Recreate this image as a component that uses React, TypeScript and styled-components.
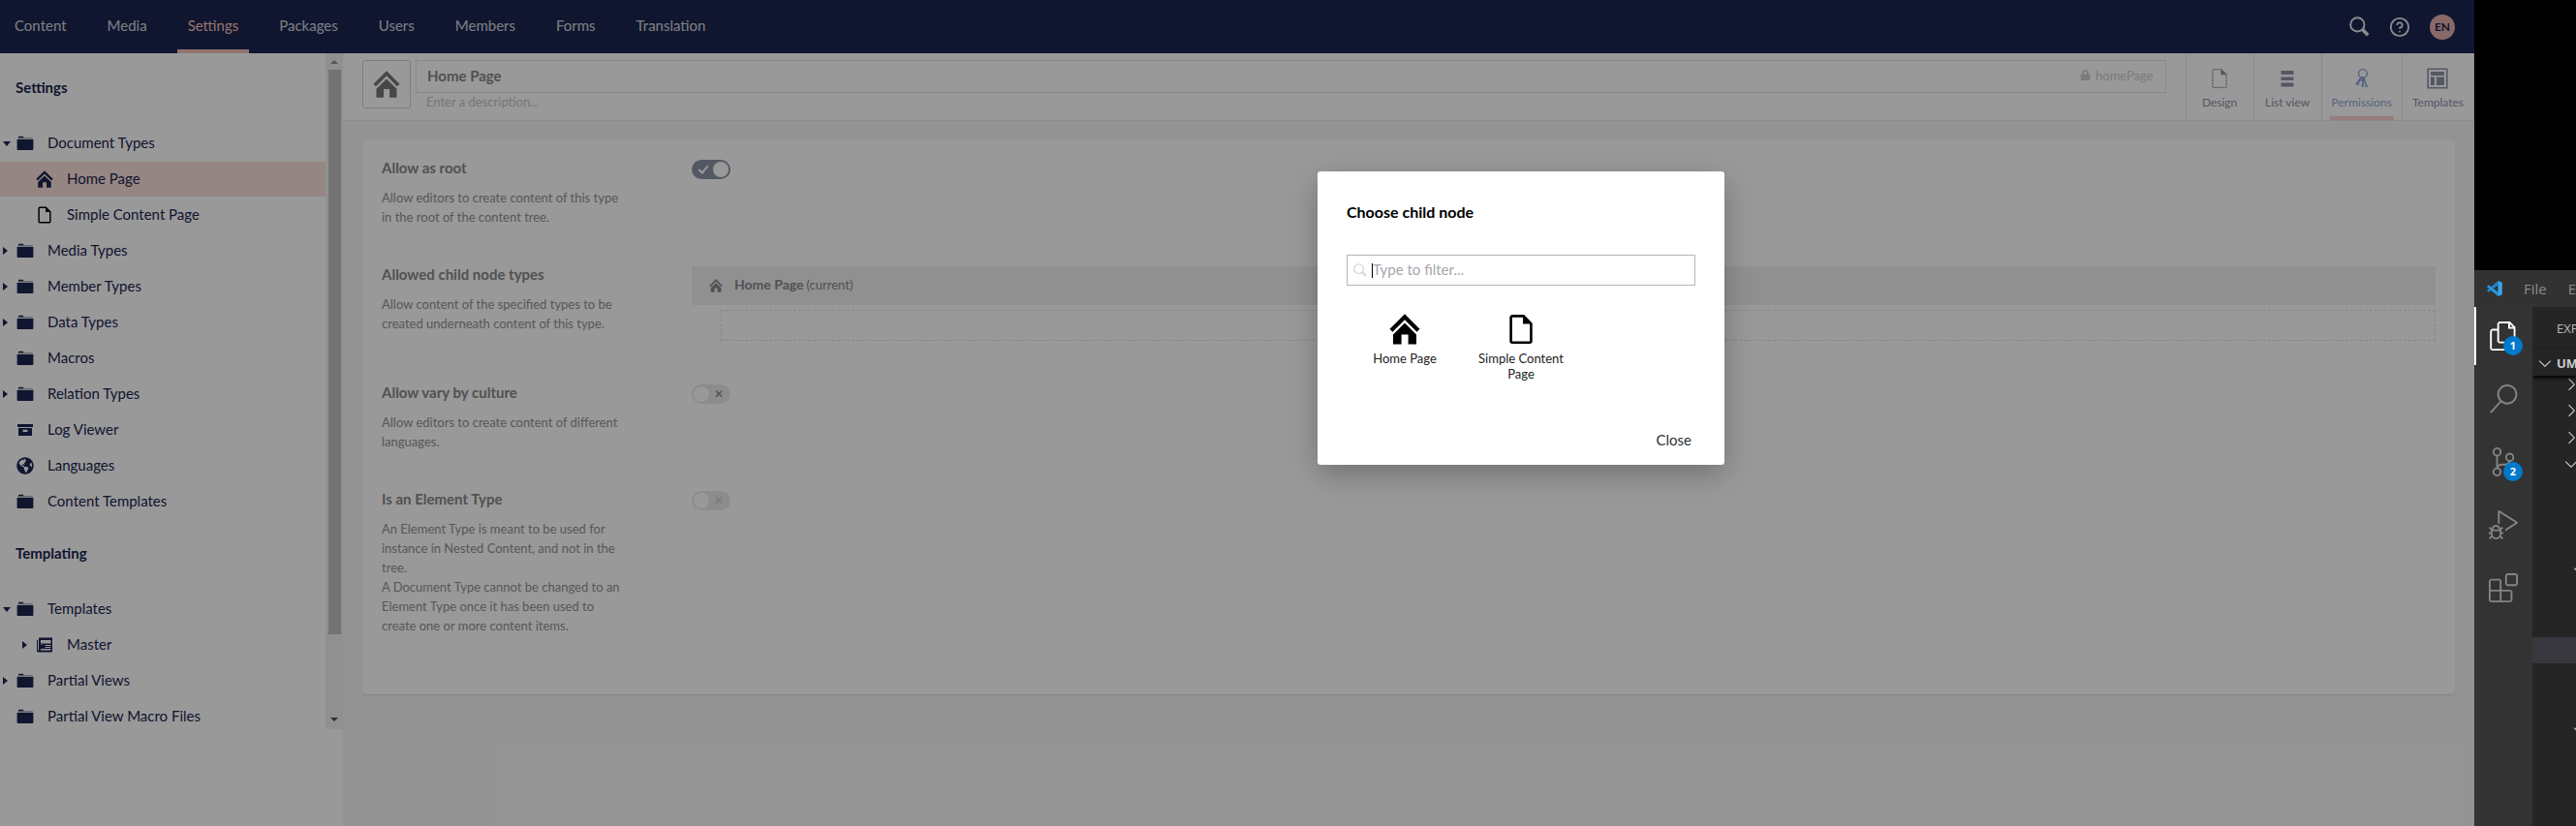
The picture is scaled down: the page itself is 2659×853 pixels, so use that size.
import React from "react";
import styled, { createGlobalStyle, css } from "styled-components";
import { FaGlobeAmericas, FaLock } from "react-icons/fa";
import {
  VscFiles,
  VscSearch,
  VscSourceControl,
  VscDebugAlt,
  VscExtensions,
  VscChevronRight,
  VscChevronDown,
} from "react-icons/vsc";
import { HelpCircle } from "lucide-react";

const color = {
  navy: "#1b264f",
  pink: "#f5c1bc",
  pale: "#fadfda",
  canvas: "#f6f6f7",
  faded: "#878789",
  fadedNavy: "#8d93a7",
  line: "#e6e6e8",
};

const GlobalStyle = createGlobalStyle`
  *, *::before, *::after { box-sizing: border-box; }
  body {
    margin: 0;
    background: #000;
    color: ${color.navy};
    font: 15px/20px Lato, "Open Sans", sans-serif;
  }
  a { color: inherit; text-decoration: none; }
  button, input { font: inherit; color: inherit; }
  h1, h2, p, ul { margin: 0; padding: 0; }
  ul { list-style: none; }
`;

/* ---------- icons ---------- */

const HomeIcon = ({ size }: { size: number }) => (
  <svg width={size} height={size} viewBox="0 0 32 32" aria-hidden="true">
    <path d="M2 17.2 16 3.2 30 17.2" fill="none" stroke="currentColor" strokeWidth="4.2" />
    <path d="M16 9.6 28 21.4V31.6H19.6V21.6H12.6V31.6H4V21.4Z" fill="currentColor" />
  </svg>
);

const PageIcon = ({ size, dashed }: { size: number; dashed?: boolean }) => (
  <svg width={size} height={size} viewBox="0 0 32 32" aria-hidden="true">
    <path
      d="M7 2.4H18.6L26.4 10.2V28.4a1.4 1.4 0 0 1-1.4 1.4H7a1.4 1.4 0 0 1-1.4-1.4V3.8A1.4 1.4 0 0 1 7 2.4Z"
      fill="none"
      stroke="currentColor"
      strokeWidth={dashed ? 1.8 : 2.6}
      strokeDasharray={dashed ? "3 1.4" : undefined}
    />
    <path d="M18 1.6 27.4 10.6H18Z" fill="currentColor" />
  </svg>
);

const FolderIcon = () => (
  <svg width="18" height="18" viewBox="0 0 18 18" aria-hidden="true">
    <path d="M2 2.6a.8.8 0 0 1 .8-.8H6.6l1.2 1.4H2Z" fill="currentColor" />
    <path d="M1.4 3.2H16.8V4.4H1.4Z" fill="currentColor" opacity=".45" />
    <path d="M.6 5H17.4V15.2a.8.8 0 0 1-.8.8H1.4a.8.8 0 0 1-.8-.8Z" fill="currentColor" />
  </svg>
);

const ArchiveIcon = () => (
  <svg width="18" height="18" viewBox="0 0 18 18" aria-hidden="true">
    <path d="M1 3H17V6H1Z" fill="currentColor" />
    <path fillRule="evenodd" d="M2 7H16V15H2ZM6.6 8.8V11H11.4V8.8Z" fill="currentColor" />
  </svg>
);

const NewsIcon = () => (
  <svg width="18" height="18" viewBox="0 0 18 18" aria-hidden="true">
    <path
      fillRule="evenodd"
      d="M3 1.500H17V15.500a1 1 0 0 1-1 1H2.500A1.500 1.500 0 0 1 1 15V4H2V14.500H3ZM5 4V7.500H15.500V4ZM9.500 9V10H15.500V9ZM9.500 11V12H15.500V11ZM5 13V14.500H15.500V13ZM5 8.500V9H7V8.500Z"
      fill="currentColor"
    />
  </svg>
);

const SearchIcon = ({ size }: { size: number }) => (
  <svg width={size} height={size} viewBox="0 0 20 20" fill="none" stroke="currentColor" aria-hidden="true">
    <circle cx="8" cy="8" r="6.8" strokeWidth="1.8" />
    <path d="M13.2 13.2 18.4 18.4" strokeWidth="3.4" />
  </svg>
);

const BarsIcon = () => (
  <svg width="22" height="22" viewBox="0 0 22 22" aria-hidden="true">
    <path d="M4.500 3H17.500V7H4.500ZM4.500 9.400H17.500V13H4.500ZM4.500 15.600H17.500V19.400H4.500Z" fill="currentColor" />
  </svg>
);

const KeysIcon = () => (
  <svg width="22" height="22" viewBox="0 0 22 22" fill="none" stroke="currentColor" aria-hidden="true">
    <circle cx="12" cy="6" r="4.400" strokeWidth="1.400" />
    <path d="M10.400 9.600 5 17.200M5.400 16 8 17.400M7 13.400 9 15" strokeWidth="1.800" />
    <path d="M12 9V20M13 10.600 16 20M12 13H9.600M12 18.400H10.400M14.600 19.200H17" strokeWidth="1.800" />
    <circle cx="11.600" cy="11.400" r="1.800" strokeWidth="1.400" />
  </svg>
);

const TemplateIcon = () => (
  <svg width="22" height="22" viewBox="0 0 22 22" aria-hidden="true">
    <path d="M1.200 1.200H20.800V20.800H1.200Z" fill="none" stroke="currentColor" strokeWidth="1.600" />
    <path d="M4 4H18V8H4ZM4 9.600H8V18H4ZM10 9.600H18V18H10Z" fill="currentColor" />
  </svg>
);

const CodeLogo = () => (
  <svg width="20" height="20" viewBox="0 0 20 20" aria-hidden="true">
    <path d="M14.400 0 19.800 2.200V17.800L14.400 20Z" fill="#3aa5ef" />
    <path d="M14.600 0V5.400L2.400 14.800 .3 13.200V12.200Z" fill="#1c84d0" />
    <path d="M14.600 20V14.600L2.400 5.200 .3 6.800V7.800Z" fill="#2a94e0" />
  </svg>
);

/* ---------- shell ---------- */

const Desktop = styled.div`
  display: flex;
  min-height: 100vh;
`;

const Backoffice = styled.div`
  position: relative;
  flex: 1;
  min-width: 0;
  display: flex;
  flex-direction: column;
  background: #fff;
`;

const Backdrop = styled.div`
  position: absolute;
  inset: 0;
  background: rgba(0, 0, 0, 0.4);
`;

const TopBar = styled.header`
  display: flex;
  justify-content: space-between;
  height: 55px;
  padding: 0 20px 0 4px;
  background: ${color.navy};
  color: #fff;
`;

const Sections = styled.nav`
  display: flex;
  gap: 20px;
`;

const SectionLink = styled.a<{ $active?: boolean }>`
  display: flex;
  align-items: center;
  padding: 0 11px 3px;
  opacity: 0.8;
  ${(p) =>
    p.$active &&
    css`
      color: ${color.pink};
      opacity: 1;
      background: linear-gradient(${color.pink}, ${color.pink}) bottom / 100% 4px no-repeat;
    `}
`;

const Tools = styled.div`
  display: flex;
  align-items: center;
  gap: 20px;
`;

const ToolButton = styled.button`
  display: flex;
  padding: 0;
  border: 0;
  background: none;
  opacity: 0.9;
`;

const Avatar = styled.button`
  width: 26px;
  height: 26px;
  padding: 0;
  border: 0;
  border-radius: 50%;
  background: #e3b0af;
  color: ${color.navy};
  font-size: 12px;
  font-weight: 700;
`;

const Body = styled.div`
  flex: 1;
  display: flex;
`;

/* ---------- sidebar ---------- */

const Sidebar = styled.aside`
  width: 354px;
  flex: none;
`;

const TreeScroll = styled.div`
  display: flex;
  height: 698px;
  overflow: hidden;
`;

const Trees = styled.div`
  flex: 1;
  padding-top: 18px;
`;

const TreeTitle = styled.h2`
  height: 36px;
  padding-left: 16px;
  font-size: 15px;
  font-weight: 700;
  line-height: 34px;
`;

const TreeList = styled.ul`
  display: flex;
  flex-direction: column;
  gap: 1px;
  padding: 21px 0 18px;
`;

const TreeLink = styled.a<{ $level: number; $active?: boolean }>`
  display: flex;
  align-items: center;
  height: 36px;
  padding-left: ${(p) => p.$level * 20}px;
  background: ${(p) => (p.$active ? color.pale : "none")};
`;

const TreeLabel = styled.span`
  padding-bottom: 2px;
`;

const Twisty = styled.span<{ $open?: boolean }>`
  display: flex;
  width: 17px;
  padding-left: 3px;
  &::before {
    content: "";
    border: 4px solid transparent;
    ${(p) =>
      p.$open
        ? css`border-top: 5px solid ${color.navy}; border-bottom: 0;`
        : css`border-left: 5px solid ${color.navy}; border-right: 0;`}
  }
`;

const NoTwisty = styled.span`
  width: 17px;
`;

const TreeIcon = styled.span<{ $black?: boolean }>`
  display: flex;
  width: 32px;
  color: ${(p) => (p.$black ? "#000" : "inherit")};
`;

const ScrollTrack = styled.div`
  display: flex;
  flex-direction: column;
  align-items: center;
  justify-content: space-between;
  width: 18px;
  padding: 7px 0 6px;
  background: #f0f0f0;
`;

const ScrollArrow = styled.span<{ $down?: boolean }>`
  border: 4px solid transparent;
  ${(p) =>
    p.$down
      ? css`border-top-color: #505050; border-bottom: 0; margin-bottom: 2px;`
      : css`border-bottom-color: #909090; border-top: 0;`}
`;

const ScrollThumb = styled.span`
  width: 13px;
  height: 583px;
  margin-bottom: 80px;
  background: #c0c0c0;
`;

/* ---------- editor ---------- */

const Editor = styled.main`
  flex: 1;
  min-width: 0;
  background: ${color.canvas};
`;

const EditorHeader = styled.header`
  display: flex;
  height: 70px;
  padding-left: 20px;
  background: #fff;
  border-bottom: 1px solid ${color.line};
`;

const IconPicker = styled.button`
  display: flex;
  align-items: center;
  justify-content: center;
  width: 50px;
  height: 50px;
  margin: 7px 5px 0 0;
  padding: 0;
  border: 1px solid #d2d2d4;
  border-radius: 3px;
  background: none;
  color: #777;
`;

const NameFields = styled.div`
  flex: 1;
  padding-top: 7px;
`;

const NameBox = styled.div`
  display: flex;
  align-items: center;
  height: 34px;
  padding: 0 12px 3px 11px;
  border: 1px solid ${color.line};
`;

const NameInput = styled.input`
  flex: 1;
  height: 28px;
  padding: 0;
  border: 0;
  background: none;
  color: ${color.faded};
  font-weight: 700;
`;

const Alias = styled.button`
  display: flex;
  align-items: center;
  gap: 5px;
  padding: 0;
  border: 0;
  background: none;
  color: #cdcdcf;
  font-size: 13px;
`;

const DescriptionInput = styled.input`
  display: block;
  width: 100%;
  height: 18px;
  padding: 0 11px;
  border: 0;
  background: none;
  font-size: 13px;
  &::placeholder {
    color: #c6c6c8;
    opacity: 1;
  }
`;

const Tabs = styled.nav`
  display: flex;
  margin-left: 20px;
  border-right: 1px solid ${color.line};
`;

const Tab = styled.a<{ $active?: boolean }>`
  display: flex;
  flex-direction: column;
  align-items: center;
  gap: 4px;
  min-width: 70px;
  padding: 15px 10px 0;
  border-left: 1px solid ${color.line};
  color: ${(p) => (p.$active ? "#90a8d1" : color.fadedNavy)};
  font-size: 12px;
  ${(p) =>
    p.$active &&
    css`
      background: linear-gradient(#f8d2ce, #f8d2ce) bottom / 66px 4px no-repeat;
    `}
`;

const Panel = styled.section`
  display: flex;
  flex-direction: column;
  gap: 40px;
  margin: 20px;
  padding: 20px 20px 60px;
  background: #fff;
  border-radius: 3px;
  box-shadow: 0 1px 1px rgba(0, 0, 0, 0.12);
`;

const Property = styled.div`
  display: flex;
  gap: 70px;
`;

const PropertyText = styled.div`
  width: 250px;
  flex: none;
`;

const PropertyLabel = styled.label`
  display: block;
  margin-bottom: 12px;
  color: ${color.faded};
  font-weight: 700;
  line-height: 17px;
`;

const PropertyHelp = styled.p`
  padding-bottom: 1px;
  color: #929294;
  font-size: 13px;
`;

const Toggle = styled.input`
  appearance: none;
  display: flex;
  align-items: center;
  width: 40px;
  height: 20px;
  margin: 0;
  padding: 2px;
  border-radius: 10px;
  background: #e9e9eb;
  &::before {
    content: "";
    order: 1;
    width: 16px;
    height: 16px;
    border-radius: 50%;
    background: #fff;
  }
  &::after {
    content: "✕";
    order: 2;
    width: 20px;
    color: #7c7c90;
    font: 700 12px/16px "DejaVu Sans", sans-serif;
    text-align: center;
  }
  &:checked {
    background: ${color.fadedNavy};
  }
  &:checked::before {
    order: 3;
  }
  &:checked::after {
    content: "";
    width: 6px;
    height: 10px;
    margin: 0 7px 3px;
    border: solid #fff;
    border-width: 0 2px 2px 0;
    transform: rotate(40deg);
  }
  &:disabled::after {
    color: #c6c6ca;
  }
`;

const ChildTypes = styled.div`
  flex: 1;
  padding-bottom: 5px;
`;

const ChildType = styled.div`
  display: flex;
  align-items: center;
  height: 40px;
  margin-bottom: 5px;
  padding-left: 18px;
  background: #f1f1f2;
  color: ${color.faded};
  font-size: 14px;
`;

const ChildName = styled.strong`
  margin: 0 3px 0 12px;
  padding-bottom: 2px;
`;

const ChildNote = styled.span`
  padding-bottom: 2px;
  font-size: 13px;
`;

const AddChild = styled.button`
  display: block;
  width: calc(100% - 30px);
  height: 32px;
  margin-left: 30px;
  border: 1px dashed #e0e0e2;
  background: none;
`;

/* ---------- dialog ---------- */

const Dialog = styled.section`
  position: absolute;
  top: 177px;
  left: 1360px;
  width: 420px;
  padding: 30px 30px 16px;
  border-radius: 3px;
  background: #fff;
  color: #000;
  box-shadow: 0 10px 30px rgba(0, 0, 0, 0.25);
`;

const DialogTitle = styled.h1`
  margin: 2px 0 34px;
  font-size: 16px;
  font-weight: 700;
  line-height: 20px;
`;

const Filter = styled.div`
  display: flex;
  align-items: center;
  height: 32px;
  padding-left: 6px;
  border: 1px solid #b5b5ba;
  color: #d8d8dc;
`;

const FilterCaret = styled.span`
  width: 1px;
  height: 15px;
  margin-left: 5px;
  background: #000;
`;

const FilterInput = styled.input`
  flex: 1;
  height: 30px;
  padding: 0 0 3px;
  border: 0;
  outline: 0;
  background: none;
  &::placeholder {
    color: #a6a6ac;
    opacity: 1;
  }
`;

const Choices = styled.ul`
  display: grid;
  grid-template-columns: repeat(3, 1fr);
  margin-top: 29px;
`;

const Choice = styled.button`
  display: flex;
  flex-direction: column;
  align-items: center;
  gap: 6px;
  width: 100%;
  padding: 0 10px;
  border: 0;
  background: none;
  color: #000;
  font-size: 13px;
  line-height: 16px;
`;

const ChoiceLabel = styled.span`
  color: #222;
`;

const DialogFooter = styled.footer`
  display: flex;
  justify-content: flex-end;
  margin-top: 50px;
`;

const CloseButton = styled.button`
  height: 20px;
  padding: 0 4px;
  border: 0;
  background: none;
  color: #303033;
`;

/* ---------- code editor window ---------- */

const CodeWindow = styled.div`
  display: flex;
  flex-direction: column;
  width: 105px;
  flex: none;
  margin-top: 279px;
  overflow: hidden;
  background: #252526;
  font-family: "Open Sans", "Noto Sans", sans-serif;
`;

const CodeMenu = styled.div`
  display: flex;
  align-items: center;
  height: 38px;
  padding-left: 13px;
  background: #323233;
  color: #8c8c8c;
  font-size: 15px;
  white-space: nowrap;
`;

const CodeMenuItem = styled.span`
  margin-left: 22px;
`;

const CodeBody = styled.div`
  flex: 1;
  display: flex;
`;

const ActivityBar = styled.nav`
  display: flex;
  flex-direction: column;
  gap: 5px;
  width: 60px;
  flex: none;
  background: #333;
`;

const Activity = styled.button<{ $active?: boolean }>`
  position: relative;
  display: flex;
  align-items: center;
  justify-content: center;
  height: 60px;
  padding: 0;
  border: 0;
  background: none;
  color: ${(p) => (p.$active ? "#fff" : "#858585")};
  box-shadow: ${(p) => (p.$active ? "inset 2px 0 #fff" : "none")};
`;

const Badge = styled.span`
  position: absolute;
  right: 10px;
  bottom: 10px;
  width: 20px;
  height: 20px;
  border-radius: 50%;
  background: #007acc;
  color: #fff;
  font-size: 11px;
  font-weight: 700;
  line-height: 20px;
`;

const Explorer = styled.div`
  flex: 1;
  min-width: 0;
  overflow: hidden;
  white-space: nowrap;
`;

const ExplorerTitle = styled.div`
  height: 44px;
  padding-left: 25px;
  color: #bbb;
  font-size: 13px;
  line-height: 44px;
`;

const ExplorerRoot = styled.div`
  position: relative;
  display: flex;
  align-items: center;
  gap: 2px;
  height: 27px;
  padding-left: 3px;
  background: #252526;
  box-shadow: 0 2px 4px #000;
  color: #ccc;
  font-size: 13px;
  font-weight: 700;
  svg {
    flex: none;
  }
`;

const ExplorerRows = styled.ul`
  margin-top: -5px;
`;

const ExplorerRow = styled.li<{ $indent: number; $selected?: boolean }>`
  display: flex;
  align-items: center;
  height: 27px;
  padding-left: ${(p) => p.$indent}px;
  background: ${(p) => (p.$selected ? "#37373d" : "none")};
  color: #ccc;
  svg {
    flex: none;
  }
  &:nth-child(even) {
    height: 28px;
  }
`;

/* ---------- data ---------- */

const sections = ["Content", "Media", "Settings", "Packages", "Users", "Members", "Forms", "Translation"];

type Node = {
  label: string;
  icon?: React.ReactNode;
  level?: number;
  twisty?: "open" | "closed";
  active?: boolean;
  black?: boolean;
};

const settingsTree: Node[] = [
  { label: "Document Types", twisty: "open" },
  { label: "Home Page", level: 1, icon: <HomeIcon size={18} />, active: true },
  { label: "Simple Content Page", level: 1, icon: <PageIcon size={18} />, black: true },
  { label: "Media Types", twisty: "closed" },
  { label: "Member Types", twisty: "closed" },
  { label: "Data Types", twisty: "closed" },
  { label: "Macros" },
  { label: "Relation Types", twisty: "closed" },
  { label: "Log Viewer", icon: <ArchiveIcon /> },
  { label: "Languages", icon: <FaGlobeAmericas size={18} /> },
  { label: "Content Templates" },
];

const templatingTree: Node[] = [
  { label: "Templates", twisty: "open" },
  { label: "Master", level: 1, twisty: "closed", icon: <NewsIcon /> },
  { label: "Partial Views", twisty: "closed" },
  { label: "Partial View Macro Files" },
];

const tabs = [
  { label: "Design", icon: <PageIcon size={22} dashed /> },
  { label: "List view", icon: <BarsIcon /> },
  { label: "Permissions", icon: <KeysIcon />, active: true },
  { label: "Templates", icon: <TemplateIcon /> },
];

const explorerRows: { open?: boolean; indent?: number; selected?: boolean }[] = [
  { indent: 30 },
  { indent: 30 },
  { indent: 30 },
  { indent: 30, open: true },
  {},
  {},
  {},
  { indent: 39, open: true },
  {},
  {},
  { selected: true },
  {},
  {},
  { indent: 39, open: true },
];

const Tree = ({ title, nodes }: { title: string; nodes: Node[] }) => (
  <section>
    <TreeTitle>{title}</TreeTitle>
    <TreeList>
      {nodes.map((n) => (
        <li key={n.label}>
          <TreeLink href="#" $level={n.level ?? 0} $active={n.active}>
            {n.twisty ? <Twisty $open={n.twisty === "open"} /> : <NoTwisty />}
            <TreeIcon $black={n.black}>{n.icon ?? <FolderIcon />}</TreeIcon>
            <TreeLabel>{n.label}</TreeLabel>
          </TreeLink>
        </li>
      ))}
    </TreeList>
  </section>
);

export default function App() {
  return (
    <>
      <GlobalStyle />
      <Desktop>
        <Backoffice>
          <TopBar>
            <Sections>
              {sections.map((s) => (
                <SectionLink key={s} href="#" $active={s === "Settings"}>
                  {s}
                </SectionLink>
              ))}
            </Sections>
            <Tools>
              <ToolButton aria-label="Search">
                <SearchIcon size={21} />
              </ToolButton>
              <ToolButton aria-label="Help">
                <HelpCircle size={22} strokeWidth={2} />
              </ToolButton>
              <Avatar>EN</Avatar>
            </Tools>
          </TopBar>
          <Body>
            <Sidebar>
              <TreeScroll>
                <Trees>
                  <Tree title="Settings" nodes={settingsTree} />
                  <Tree title="Templating" nodes={templatingTree} />
                </Trees>
                <ScrollTrack aria-hidden="true">
                  <ScrollArrow />
                  <ScrollThumb />
                  <ScrollArrow $down />
                </ScrollTrack>
              </TreeScroll>
            </Sidebar>
            <Editor>
              <EditorHeader>
                <IconPicker aria-label="Change icon">
                  <HomeIcon size={28} />
                </IconPicker>
                <NameFields>
                  <NameBox>
                    <NameInput aria-label="Name" defaultValue="Home Page" />
                    <Alias>
                      <FaLock size={11} />
                      homePage
                    </Alias>
                  </NameBox>
                  <DescriptionInput aria-label="Description" placeholder="Enter a description..." />
                </NameFields>
                <Tabs>
                  {tabs.map((t) => (
                    <Tab key={t.label} href="#" $active={t.active}>
                      {t.icon}
                      {t.label}
                    </Tab>
                  ))}
                </Tabs>
              </EditorHeader>
              <Panel>
                <Property>
                  <PropertyText>
                    <PropertyLabel htmlFor="root">Allow as root</PropertyLabel>
                    <PropertyHelp>Allow editors to create content of this type in the root of the content tree.</PropertyHelp>
                  </PropertyText>
                  <Toggle id="root" type="checkbox" role="switch" defaultChecked />
                </Property>
                <Property>
                  <PropertyText>
                    <PropertyLabel htmlFor="children">Allowed child node types</PropertyLabel>
                    <PropertyHelp>Allow content of the specified types to be created underneath content of this type.</PropertyHelp>
                  </PropertyText>
                  <ChildTypes>
                    <ChildType>
                      <HomeIcon size={14} />
                      <ChildName>Home Page</ChildName>
                      <ChildNote>(current)</ChildNote>
                    </ChildType>
                    <AddChild id="children" />
                  </ChildTypes>
                </Property>
                <Property>
                  <PropertyText>
                    <PropertyLabel htmlFor="culture">Allow vary by culture</PropertyLabel>
                    <PropertyHelp>Allow editors to create content of different languages.</PropertyHelp>
                  </PropertyText>
                  <Toggle id="culture" type="checkbox" role="switch" />
                </Property>
                <Property>
                  <PropertyText>
                    <PropertyLabel htmlFor="element">Is an Element Type</PropertyLabel>
                    <PropertyHelp>
                      An Element Type is meant to be used for instance in Nested Content, and not in the tree.
                      <br />A Document Type cannot be changed to an Element Type once it has been used to create one or more
                      content items.
                    </PropertyHelp>
                  </PropertyText>
                  <Toggle id="element" type="checkbox" role="switch" disabled />
                </Property>
              </Panel>
            </Editor>
          </Body>
          <Backdrop />
          <Dialog role="dialog" aria-labelledby="dialog-title">
            <DialogTitle id="dialog-title">Choose child node</DialogTitle>
            <Filter>
              <SearchIcon size={14} />
              <FilterCaret />
              <FilterInput aria-label="Filter" placeholder="Type to filter..." />
            </Filter>
            <Choices>
              <li>
                <Choice>
                  <HomeIcon size={32} />
                  <ChoiceLabel>Home Page</ChoiceLabel>
                </Choice>
              </li>
              <li>
                <Choice>
                  <PageIcon size={32} />
                  <ChoiceLabel>Simple Content Page</ChoiceLabel>
                </Choice>
              </li>
            </Choices>
            <DialogFooter>
              <CloseButton>Close</CloseButton>
            </DialogFooter>
          </Dialog>
        </Backoffice>
        <CodeWindow>
          <CodeMenu>
            <CodeLogo />
            <CodeMenuItem>File</CodeMenuItem>
            <CodeMenuItem>E</CodeMenuItem>
          </CodeMenu>
          <CodeBody>
            <ActivityBar>
              <Activity $active aria-label="Explorer">
                <VscFiles size={30} />
                <Badge>1</Badge>
              </Activity>
              <Activity aria-label="Search">
                <VscSearch size={30} />
              </Activity>
              <Activity aria-label="Source control">
                <VscSourceControl size={30} />
                <Badge>2</Badge>
              </Activity>
              <Activity aria-label="Run and debug">
                <VscDebugAlt size={30} />
              </Activity>
              <Activity aria-label="Extensions">
                <VscExtensions size={30} />
              </Activity>
            </ActivityBar>
            <Explorer>
              <ExplorerTitle>EXP</ExplorerTitle>
              <ExplorerRoot>
                <VscChevronDown size={20} />
                UM
              </ExplorerRoot>
              <ExplorerRows>
                {explorerRows.map((r, i) => (
                  <ExplorerRow key={i} $indent={r.indent ?? 0} $selected={r.selected}>
                    {r.indent && (r.open ? <VscChevronDown size={20} /> : <VscChevronRight size={20} />)}
                  </ExplorerRow>
                ))}
              </ExplorerRows>
            </Explorer>
          </CodeBody>
        </CodeWindow>
      </Desktop>
    </>
  );
}
